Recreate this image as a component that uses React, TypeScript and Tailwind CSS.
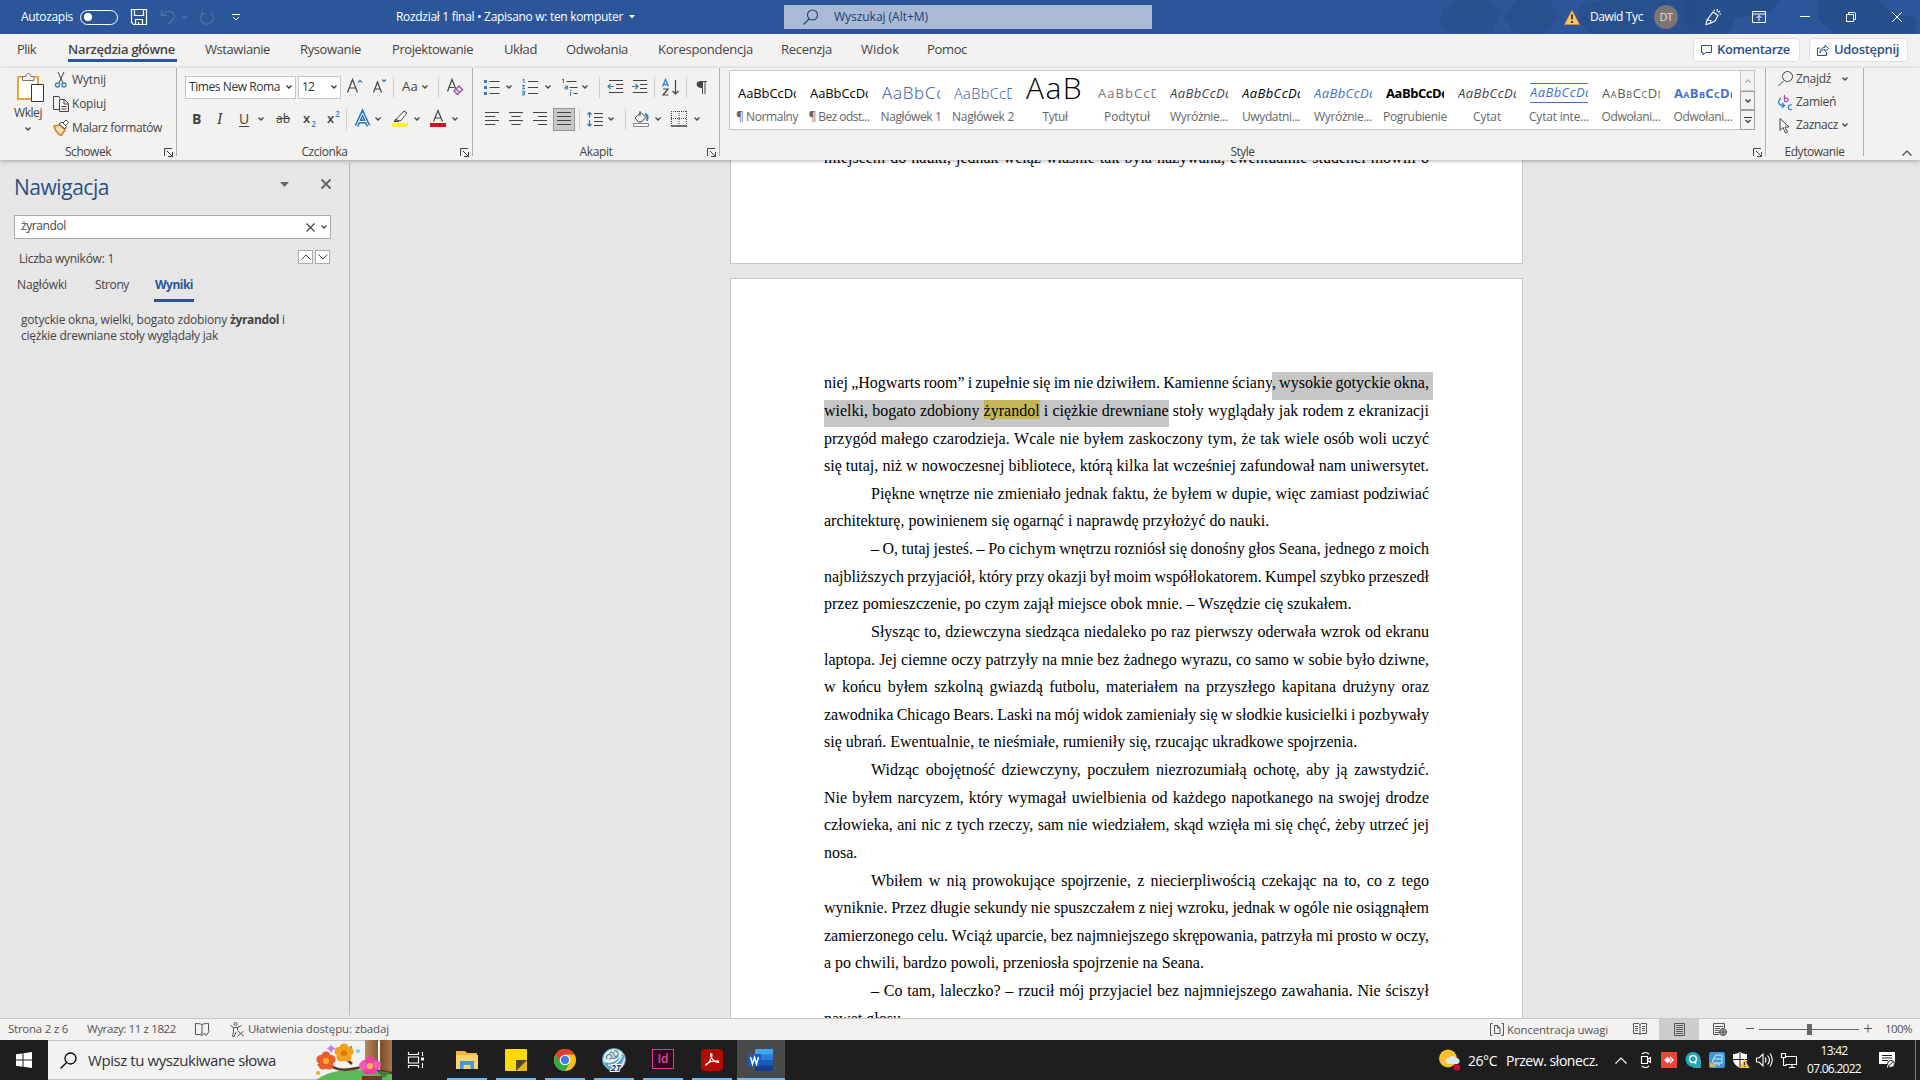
import { useLayoutEffect, useRef, useState } from "react"
import type { ReactNode } from "react"
import clsx from "clsx"

interface FitProps {
  w: number
  className?: string
  children: string
}

// Tracks a label in or out so that it fills exactly w pixels
function Fit({ w, className, children }: FitProps) {
  const ref = useRef<HTMLSpanElement>(null)
  const [spacing, setSpacing] = useState(0)

  useLayoutEffect(() => {
    if (!ref.current) return
    ref.current.style.letterSpacing = "0px"
    const natural = ref.current.getBoundingClientRect().width
    const next = (w - natural) / children.length
    ref.current.style.letterSpacing = `${next}px`
    setSpacing(next)
  }, [w, children])

  return (
    <span ref={ref} className={clsx("inline-block shrink-0 whitespace-nowrap", className)} style={{ letterSpacing: spacing }}>
      {children}
    </span>
  )
}

interface IconProps {
  w?: number
  h?: number
  className?: string
  children: ReactNode
}

function Icon({ w = 16, h = 16, className, children }: IconProps) {
  return (
    <svg
      width={w}
      height={h}
      viewBox={`0 0 ${w} ${h}`}
      fill="none"
      stroke="currentColor"
      strokeWidth="1"
      className={clsx("shrink-0 overflow-visible", className)}
    >
      {children}
    </svg>
  )
}

function Chevron({ className }: { className?: string }) {
  return (
    <Icon w={6} h={4} className={className}>
      <path d="M0.5 0.5 3 3 5.5 0.5" strokeWidth="1.3" />
    </Icon>
  )
}

function Launcher() {
  return (
    <Icon w={9} h={9}>
      <path d="M0.5 8V0.5H8M3 3l5 5M8.5 4v4.5H4" />
    </Icon>
  )
}

function Lines({ widths, align = "left" }: { widths: number[]; align?: "left" | "center" | "right" }) {
  return (
    <Icon w={14} h={14}>
      {widths.map((w, i) => {
        const x = align === "left" ? 0 : align === "right" ? 14 - w : (14 - w) / 2
        return <path key={i} d={`M${x} ${i * 4 + 0.5}h${w}`} />
      })}
    </Icon>
  )
}

/* ---------- Title bar ---------- */

function TitleBar() {
  return (
    <header className="relative flex h-[34px] shrink-0 items-center overflow-hidden bg-[#2b579a] text-xs text-white">
      <div className="absolute inset-y-0 right-0 w-[480px]">
        <svg width="480" height="34" fill="#264b85">
          <path d="M4 8 14 0h36l10 12-8 22H14L0 24Z" opacity=".5" />
          <path d="M76 0h34l8 14-12 20H74L64 16ZM142 4l22-4h90l10 15-9 19H150l-14-14Z" opacity=".55" />
          <path d="M246 0h94l-10 12-34 6-8 16h-32l-14-14ZM378 0h60l14 14 24 4v16h-80l-18-14Z" opacity=".65" />
        </svg>
      </div>
      <div className="relative flex w-full items-center">
        <Fit w={52} className="ml-[21px]">Autozapis</Fit>
        <div className="ml-[7px] flex h-[15px] w-[38px] items-center rounded-full border border-white px-[3px]">
          <div className="size-[8px] rounded-full bg-white" />
        </div>
        <Icon className="ml-[13px]">
          <path d="M.5.5h15v15h-13l-2-2ZM3.5.5v6h9v-6M4.5 15.500v-5h7v5M7.500 13v2.500" strokeWidth="1.2" />
        </Icon>
        <div className="flex items-center text-[#4a70ac]">
          <Icon w={14} className="ml-[14px]">
            <path d="M.5 1v5.500H6M1 6C4 2 9 1 12 4s1 7-5 11" strokeWidth="1.3" />
          </Icon>
          <Chevron className="ml-[7px]" />
          <Icon w={16} className="ml-[11px]">
            <path d="M3 1v4h4M3 5C-.500 9 2 15 8 15s9-7 4-11" strokeWidth="1.3" />
          </Icon>
        </div>
        <Icon w={8} h={7} className="ml-[17px]">
          <path d="M0 .5h8M1 3l3 3 3-3" />
        </Icon>
        <Fit w={227} className="ml-[156px]">Rozdział 1 final • Zapisano w: ten komputer</Fit>
        <Icon w={6} h={4} className="ml-[6px]">
          <path d="M0 0h6L3 3.500Z" fill="currentColor" stroke="none" />
        </Icon>
        <div className="ml-[149px] flex h-[24px] w-[368px] items-center bg-[#a8bad5] text-[#1e3f73]">
          <Icon w={16} className="ml-[19px]">
            <circle cx="9.500" cy="6" r="5" strokeWidth="1.1" />
            <path d="M6 10 .5 15.500" strokeWidth="1.1" />
          </Icon>
          <Fit w={94} className="ml-[15px]">Wyszukaj (Alt+M)</Fit>
        </div>
        <Icon w={16} h={15} className="ml-auto">
          <path d="M8 .5 15.500 14.500H.5Z" fill="#f8c66b" stroke="#d98536" />
          <path d="M8 4.500v5M8 11v2" stroke="#333" strokeWidth="1.800" />
        </Icon>
        <Fit w={53} className="ml-[10px]">Dawid Tyc</Fit>
        <div className="ml-[11px] flex size-6 items-center justify-center rounded-full bg-[#7c7473] text-[11px] text-[#e3dfde]">
          <Fit w={13}>DT</Fit>
        </div>
        <Icon w={16} className="ml-[27px]">
          <path d="M8 3 13 6.500 10 12 5 14.500 1 15.500 2 11ZM2 11l4 .5-1 3M9 .5l.5 1.500M12.500 0 12 2.500M15 2l-2 1.500M16 5h-1.500" strokeWidth="1.1" />
        </Icon>
        <Icon w={14} h={12} className="-mt-px ml-[31px]">
          <path d="M.5.5h13v11H.5ZM.5 3h13M7 10V4.500M4.500 7 7 4.500 9.500 7" />
        </Icon>
        <Icon w={10} h={10} className="-mt-px ml-[34px]"><path d="M0 4.500h10" /></Icon>
        <Icon w={10} h={10} className="-mt-px ml-[36px]">
          <path d="M.5 2.500h7v7h-7ZM2.500 2.500v-2h6a1 1 0 0 1 1 1v6h-2" />
        </Icon>
        <Icon w={10} h={10} className="-mt-px ml-[36px] mr-[18px]"><path d="m0 0 10 10M10 0 0 10" /></Icon>
      </div>
    </header>
  )
}

/* ---------- Tabs ---------- */

const TABS = [
  { label: "Wstawianie", w: 65, className: "ml-[28px]" },
  { label: "Rysowanie", w: 61, className: "ml-[30px]" },
  { label: "Projektowanie", w: 81, className: "ml-[31px]" },
  { label: "Układ", w: 33, className: "ml-[31px]" },
  { label: "Odwołania", w: 62, className: "ml-[29px]" },
  { label: "Korespondencja", w: 95, className: "ml-[30px]" },
  { label: "Recenzja", w: 51, className: "ml-[28px]" },
  { label: "Widok", w: 38, className: "ml-[29px]" },
  { label: "Pomoc", w: 40, className: "ml-[28px]" },
]

function TabBar() {
  return (
    <nav className="flex h-[34px] shrink-0 items-center bg-[#f3f2f1] pb-[2px] text-[13px] text-[#444]">
      <Fit w={19} className="ml-[17px]">Plik</Fit>
      <div className="ml-[32px] flex h-[24px] w-[109px] flex-col items-start border-b-[3px] border-[#2b579a]">
        <Fit w={107} className="mt-[2px] font-semibold leading-[19px]">Narzędzia główne</Fit>
      </div>
      {TABS.map((tab) => (
        <Fit key={tab.label} w={tab.w} className={tab.className}>{tab.label}</Fit>
      ))}
      <div className="ml-auto mr-[12px] flex gap-[9px] font-semibold text-[#2b4f87]">
        <button className="flex h-[24px] w-[107px] items-center rounded-sm border border-[#e1dfdd] bg-white pl-[7px]">
          <Icon w={11} h={11}><path d="M.5.5h10v7H4.500l-2.500 2.500V7.500H.5Z" /></Icon>
          <Fit w={73} className="ml-[5px]">Komentarze</Fit>
        </button>
        <button className="flex h-[24px] w-[99px] items-center rounded-sm border border-[#e1dfdd] bg-white pl-[7px]">
          <Icon w={12} h={12}>
            <path d="M3 4H.5v7.500h9V8M3 9c0-4 2-5.500 5-5.500V1l3.500 3.500L8 7.500V5.500C6 5.500 4 6 3 9Z" />
          </Icon>
          <Fit w={65} className="ml-[5px]">Udostępnij</Fit>
        </button>
      </div>
    </nav>
  )
}

/* ---------- Ribbon ---------- */

function Group({ label, labelWidth, className, launcher = true, children }: {
  label: string
  labelWidth: number
  className: string
  launcher?: boolean
  children: ReactNode
}) {
  return (
    <section className={clsx("flex h-[88px] shrink-0 flex-col border-r border-[#b3b0ad]", className)}>
      <div className="h-[76px] shrink-0">{children}</div>
      <div className="flex h-[16px] shrink-0 items-center">
        <span className={clsx("flex flex-1 justify-center", launcher && "-mr-[14px]")}>
          <Fit w={labelWidth}>{label}</Fit>
        </span>
        {launcher && <span className="w-[14px] pl-[2px]"><Launcher /></span>}
      </div>
    </section>
  )
}

function Divider({ className }: { className?: string }) {
  return <div className={clsx("h-[21px] w-px shrink-0 bg-[#d2d0ce]", className)} />
}

function ClipboardGroup() {
  return (
    <Group label="Schowek" labelWidth={46} className="w-[177px]">
      <div className="flex">
        <div className="flex w-[52px] flex-col items-start pl-[14px] pt-[4px]">
          <Icon w={32} h={31} className="-ml-px">
            <path d="M5 5h20v22H5Z" fill="#fff" stroke="#e8a33d" strokeWidth="2" />
            <path d="M9.500 4.500H13c0-4 5-4 5 0h3v4H9.500Z" fill="#f3f2f1" stroke="#777" />
            <path d="M18.500 12.500h12v17h-12Z" fill="#fff" stroke="#333" />
          </Icon>
          <Fit w={28} className="mt-[2px] leading-4">Wklej</Fit>
          <Chevron className="ml-[11px] mt-[6px]" />
        </div>
        <div className="flex flex-col">
          <div className="flex h-6 items-center">
            <Icon w={12} className="ml-[3px]">
              <path d="M3 0 8 11M9 0 4 11" />
              <circle cx="2.500" cy="13" r="2" stroke="#2e86c8" strokeWidth="1.300" />
              <circle cx="9" cy="13" r="2" stroke="#2e86c8" strokeWidth="1.300" />
            </Icon>
            <Fit w={34} className="ml-[5px]">Wytnij</Fit>
          </div>
          <div className="flex h-6 items-center">
            <Icon className="ml-[1px]">
              <path d="M6 13.500H.5V.5H6l1 2M6.500 3.500h5l4 4v8h-9ZM11 4v4h4M8.500 10.500h5M8.500 13h5" />
            </Icon>
            <Fit w={34} className="ml-[3px]">Kopiuj</Fit>
          </div>
          <div className="flex h-6 items-center">
            <Icon className="ml-[1px]">
              <path d="M1 6 7 5l5 5-4 5.500C5 14 2 10 1 6Z" fill="#f9ddb9" stroke="#e07b20" strokeWidth="1.500" />
              <path d="m6 4 3-2 4.500 4.500L12 9ZM10 3l3-3 2.500 2.500-3 3" fill="#fff" />
            </Icon>
            <Fit w={90} className="ml-[3px]">Malarz formatów</Fit>
          </div>
        </div>
      </div>
    </Group>
  )
}

function FontGroup() {
  return (
    <Group label="Czcionka" labelWidth={46} className="w-[296px]">
      <div className="mt-[8px] flex h-[22px] items-center pl-[8px]">
        <div className="flex h-[23px] w-[111px] shrink-0 items-center justify-between border border-[#c8c6c4] bg-white px-[3px] text-[#333]">
          <Fit w={91}>Times New Roma</Fit>
          <Chevron />
        </div>
        <div className="ml-[2px] flex h-[23px] w-[43px] shrink-0 items-center justify-between border border-[#c8c6c4] bg-white px-[3px] text-[#333]">
          <Fit w={12}>12</Fit>
          <Chevron />
        </div>
        <Icon w={16} h={14} className="-mt-[3px] ml-[6px]">
          <path d="M.5 13.500 5.500.5l5 13M2.500 9h6" strokeWidth="1.200" />
          <path d="m11 3.500 2-2 2 2" stroke="#2e86c8" strokeWidth="1.300" />
        </Icon>
        <Icon w={14} h={12} className="ml-[10px]">
          <path d="M.5 11.500 4.500 1l4 10.500M2 8h5" strokeWidth="1.200" />
          <path d="m9 -1.500 2 2 2-2" stroke="#2e86c8" strokeWidth="1.300" />
        </Icon>
        <Divider className="ml-[6px]" />
        <Fit w={16} className="ml-[8px] text-[13px]">Aa</Fit>
        <Chevron className="ml-[4px]" />
        <Divider className="ml-[10px]" />
        <Icon w={17} className="ml-[8px]">
          <path d="M.5 12.500 5 .5l4 10M2 8.500h5" strokeWidth="1.200" />
          <path d="m7 12 5-5 3.500 3.500-5 5ZM9 10l3.500 3.500" stroke="#a347b5" strokeWidth="1.300" />
        </Icon>
      </div>
      <div className="mt-[10px] flex h-[22px] items-center">
        <b className="ml-[15px] w-[10px] text-[14px] font-bold">B</b>
        <i className="ml-[15px] w-[8px] font-['Liberation_Serif',serif] text-[16px]">I</i>
        <span className="ml-[14px] w-[10px] text-[14px] underline underline-offset-2">U</span>
        <Chevron className="ml-[9px]" />
        <Fit w={14} className="ml-[12px] line-through">ab</Fit>
        <span className="ml-[13px] flex w-[13px] text-[13px] font-semibold">
          x<span className="self-end pl-px text-[8px] leading-[8px] text-[#2e86c8]">2</span>
        </span>
        <span className="ml-[11px] flex w-[13px] text-[13px] font-semibold">
          x<span className="pl-px text-[8px] leading-[8px] text-[#2e86c8]">2</span>
        </span>
        <Divider className="ml-[6px]" />
        <Icon w={15} h={15} className="ml-[8px]">
          <path d="M1.500 14 7.500 1l6 13M4 9.500h7" stroke="#2474b8" strokeWidth="4" />
          <path d="M1.500 14 7.500 1l6 13M4 9.500h7" stroke="#fff" strokeWidth="1" />
        </Icon>
        <Chevron className="ml-[5px]" />
        <Icon w={16} h={16} className="ml-[11px]">
          <path d="M0 12h16v4H0Z" fill="#fdf02d" stroke="none" />
          <path d="M4 8.500 12 0l3 2-6 7.500-4 .5Z" fill="#f8f8f8" />
          <path d="m4 8 3 2.500H2Z" fill="#777" />
        </Icon>
        <Chevron className="ml-[6px]" />
        <Icon w={16} h={16} className="ml-[10px]">
          <path d="M0 12h16v4H0Z" fill="#c9161d" stroke="none" />
          <path d="M3.500 10.500 8 -.5l4.500 11M5 7h6" strokeWidth="1.200" />
        </Icon>
        <Chevron className="ml-[6px]" />
      </div>
    </Group>
  )
}

function ParagraphGroup() {
  return (
    <Group label="Akapit" labelWidth={33} className="w-[247px]">
      <div className="mt-[8px] flex h-[22px] items-center">
        <Icon className="ml-[11px]">
          <path d="M5.500 2.500h10M5.500 8.500h10M5.500 14.500h10" />
          <path d="M0 1h3v3H0ZM0 7h3v3H0ZM0 13h3v3H0Z" fill="#2e7cbc" stroke="none" />
        </Icon>
        <Chevron className="ml-[6px]" />
        <Icon className="ml-[10px]">
          <path d="M6 2.500h10M6 8.500h10M6 14.500h10" />
          <path d="M.5 1 2 0v4M0 6.500h2.500L.500 9.500H3M0 12h2.500v4H0M0 14h2.500" stroke="#2e7cbc" />
        </Icon>
        <Chevron className="ml-[7px]" />
        <Icon className="ml-[11px]">
          <path d="M4.500 2.500h10M7.500 8.500h8M11.500 14.500h4" />
          <path d="M0 1 1.500 0v4M3 7h2.500v3H3V8.500h2.500M8.500 11v1M8.500 13v3.500" stroke="#2e7cbc" />
        </Icon>
        <Chevron className="ml-[4px]" />
        <Divider className="ml-[11px]" />
        <Icon w={15} h={14} className="ml-[8px]">
          <path d="M1 .5h14M8 4.500h7M8 8.500h7M1 12.500h14" />
          <path d="M0 6.500h6M2.500 4 0 6.500 2.500 9" stroke="#2e7cbc" strokeWidth="1.200" />
        </Icon>
        <Icon w={15} h={14} className="ml-[9px]">
          <path d="M1 .5h14M8 4.500h7M8 8.500h7M1 12.500h14" />
          <path d="M0 6.500h6M3.500 4 6 6.500 3.500 9" stroke="#2e7cbc" strokeWidth="1.200" />
        </Icon>
        <Divider className="ml-[7px]" />
        <Icon w={17} h={17} className="ml-[7px]">
          <path d="M.5 7.500 3.500.5l3 7M1.500 5.500h4" stroke="#2e86c8" strokeWidth="1.300" />
          <path d="M1 10h5l-5 6h5.500M13.500 1v14M10.500 12l3 3 3-3" strokeWidth="1.200" />
        </Icon>
        <Divider className="ml-[7px]" />
        <Icon w={11} h={13} className="ml-[9px]">
          <path d="M5 0h6v1H9.500v12h-1V1H7v12H6V7C-1 7-1 0 5 0Z" fill="currentColor" stroke="none" />
        </Icon>
      </div>
      <div className="mt-[10px] flex h-[22px] items-center">
        <div className="ml-[12px] flex items-center gap-[10px]">
          <Lines widths={[14, 10, 14, 10]} />
          <Lines widths={[14, 9, 14, 9]} align="center" />
          <Lines widths={[14, 9, 14, 9]} align="right" />
        </div>
        <div className="ml-[6px] flex h-[23px] w-[22px] items-center justify-center border border-[#979593] bg-[#cbc9c8]">
          <Lines widths={[14, 14, 14, 14]} />
        </div>
        <Divider className="ml-[4px]" />
        <Icon w={16} h={14} className="ml-[7px]">
          <path d="M7 1.500h9M7 5.500h9M7 9.500h9M7 13.500h9" />
          <path d="M2.500 0v5.500M.5 2.500l2-2 2 2M2.500 8v6M.5 12l2 2 2-2" stroke="#2e7cbc" strokeWidth="1.300" />
        </Icon>
        <Chevron className="ml-[5px]" />
        <Divider className="ml-[11px]" />
        <Icon w={16} h={16} className="ml-[7px]">
          <path d="M.5 12.500h15v3H.5Z" fill="#fff" stroke="#888" />
          <path d="m2 7 6-5.500 5 5L8 11H5.500ZM7 5V0" />
          <path d="M12 3c3 1 3 4 2 7" stroke="#2e7cbc" strokeWidth="2" />
        </Icon>
        <Chevron className="ml-[6px]" />
        <Icon w={16} h={16} className="ml-[10px]">
          <path d="M.5 0v15M8 0v15M15.500 0v15M0 .5h16M0 7.500h16" strokeDasharray="1 1" />
          <path d="M0 15h16" strokeWidth="1.500" />
        </Icon>
        <Chevron className="ml-[7px]" />
      </div>
    </Group>
  )
}

interface StyleItem {
  name: string
  w: number
  sample?: string
  sw?: number
  className: string
}

const STYLES: StyleItem[] = [
  { name: "¶ Normalny", w: 62, className: "text-[13px] text-black" },
  { name: "¶ Bez odst...", w: 61, className: "text-[13px] text-black" },
  { name: "Nagłówek 1", w: 61, sample: "AaBbCc", sw: 63, className: "text-[17px] font-light text-[#2f5496]" },
  { name: "Nagłówek 2", w: 62, sample: "AaBbCcD", sw: 63, className: "text-[14.5px] font-light text-[#2f5496]" },
  { name: "Tytuł", w: 25, sample: "AaB", sw: 57, className: "-mt-[11px] text-[30px] font-light text-black" },
  { name: "Podtytuł", w: 46, sample: "AaBbCcD", sw: 63, className: "text-[13px] text-[#767676]" },
  { name: "Wyróżnie...", w: 58, className: "text-[13px] italic text-[#404040]" },
  { name: "Uwydatni...", w: 58, className: "text-[13px] italic text-black" },
  { name: "Wyróżnie...", w: 58, className: "text-[13px] italic text-[#4472c4]" },
  { name: "Pogrubienie", w: 64, className: "text-[13px] font-bold text-black" },
  { name: "Cytat", w: 28, className: "text-[13px] italic text-[#404040]" },
  { name: "Cytat inte...", w: 60, className: "-mt-[2px] h-[20px] border-y border-[#4472c4] text-[13px] italic text-[#4472c4]" },
  { name: "Odwołani...", w: 59, className: "text-[13px] [font-variant-caps:small-caps] text-[#5a5a5a]" },
  { name: "Odwołani...", w: 59, className: "text-[13px] font-bold [font-variant-caps:small-caps] text-[#4472c4]" },
]

function StylesGroup() {
  return (
    <Group label="Style" labelWidth={24} className="w-[1046px]">
      <div className="ml-[9px] mt-[2px] flex h-[60px] w-[1026px] border border-[#c8c6c4] bg-white">
        <div className="flex flex-1 pl-[1px]">
          {STYLES.map((item, i) => (
            <div key={i} className="flex w-[72px] shrink-0 flex-col items-center pt-[6px]">
              <div className="flex h-[33px] w-[58px] items-center overflow-hidden">
                <div className={clsx("flex w-full items-center", item.className)}>
                  <Fit w={item.sw ?? 63}>{item.sample ?? "AaBbCcDd"}</Fit>
                </div>
              </div>
              <Fit w={item.w} className="leading-[14px] text-[#666]">{item.name}</Fit>
            </div>
          ))}
        </div>
        <div className="-my-px -mr-px flex w-[15px] flex-col text-[#333]">
          <div className="flex h-[21px] items-center justify-center border border-[#c8c6c4] bg-[#f3f2f1] text-[#b0b0b0]">
            <Chevron className="rotate-180" />
          </div>
          <div className="flex h-[19px] items-center justify-center border border-[#a19f9d] bg-[#f3f2f1]">
            <Chevron />
          </div>
          <div className="flex h-[20px] items-center justify-center border border-[#a19f9d] bg-[#f3f2f1]">
            <Icon w={8} h={7}><path d="M0 .5h8M1.500 3 4 5.500 6.500 3" strokeWidth="1.200" /></Icon>
          </div>
        </div>
      </div>
    </Group>
  )
}

function EditingGroup() {
  return (
    <Group label="Edytowanie" labelWidth={60} className="w-[98px]" launcher={false}>
      <div className="flex flex-col pl-[12px]">
        <div className="flex h-[22px] items-center">
          <Icon w={15} h={15} className="-mt-[2px]">
            <circle cx="9.500" cy="5.500" r="5" />
            <path d="m6 9.500-5.500 5.500" />
          </Icon>
          <Fit w={35} className="ml-[3px]">Znajdź</Fit>
          <Chevron className="ml-[11px]" />
        </div>
        <div className="flex h-[24px] items-center">
          <Icon w={15} h={15}>
            <path d="M6.500 0v6.500M6.500 3.500c5-2 5 4 0 3" stroke="#a347b5" strokeWidth="1.200" />
            <path d="M3 3C-1 6 0 11 6 10.500M4 8l2.500 2.500L4 13M14 10c-5-1.500-5 6 0 4.500" stroke="#2e86c8" strokeWidth="1.300" />
          </Icon>
          <Fit w={40} className="ml-[3px]">Zamień</Fit>
        </div>
        <div className="flex h-[22px] items-center">
          <Icon w={15} h={15}>
            <path d="M2 .5v12l3-3 2.500 5.500 2-1-2.500-5h4Z" />
          </Icon>
          <Fit w={42} className="ml-[3px]">Zaznacz</Fit>
          <Chevron className="ml-[4px]" />
        </div>
      </div>
    </Group>
  )
}

function Ribbon() {
  return (
    <div className="relative z-10 flex h-[92px] shrink-0 bg-[#f3f2f1] text-xs text-[#444] shadow-[0_1px_4px_rgba(0,0,0,0.3)]">
      <ClipboardGroup />
      <FontGroup />
      <ParagraphGroup />
      <StylesGroup />
      <EditingGroup />
      <Icon w={10} h={6} className="ml-[38px] mt-[82px]"><path d="m.5 5.500 4.500-4.500 4.500 4.500" strokeWidth="1.200" /></Icon>
    </div>
  )
}

/* ---------- Navigation pane ---------- */

function NavigationPane() {
  return (
    <aside className="mt-[3px] h-[852px] w-[350px] shrink-0 border-r border-[#b8b8b8] pt-[10px] text-xs text-[#444]">
      <div className="flex h-[28px] items-center pl-[14px] text-[#2b4f87]">
        <Fit w={95} className="text-[21px] leading-[28px]">Nawigacja</Fit>
        <Icon w={9} h={5} className="-mt-[6px] ml-[171px] text-[#666]">
          <path d="M0 0h9L4.500 5Z" fill="currentColor" stroke="none" />
        </Icon>
        <Icon w={10} h={10} className="-mt-[6px] ml-[32px] text-[#666]"><path d="m.5.5 9 9M9.500.5l-9 9" strokeWidth="2" /></Icon>
      </div>
      <div className="ml-[14px] mt-[14px] flex h-[24px] w-[317px] items-center border border-[#ababab] bg-white pl-[6px] pr-[3px]">
        <Fit w={45} className="-mt-[2px]">żyrandol</Fit>
        <Icon w={9} h={9} className="ml-auto mr-[6px]"><path d="m.5.5 8 8M8.500.5l-8 8" strokeWidth="1.200" /></Icon>
        <Chevron />
      </div>
      <div className="mt-[10px] flex h-[16px] items-center pl-[19px]">
        <Fit w={95} className="mt-[4px]">Liczba wyników: 1</Fit>
        <div className="ml-auto mr-[19px] flex gap-[2px]">
          <div className="flex h-[14px] w-[15px] items-center justify-center border border-[#ababab] bg-white">
            <Icon w={10} h={6}><path d="m.5 5.500 4.500-4.500 4.500 4.500" /></Icon>
          </div>
          <div className="flex h-[14px] w-[15px] items-center justify-center border border-[#ababab] bg-white">
            <Icon w={10} h={6}><path d="m.5.5 4.500 4.500 4.500-4.500" /></Icon>
          </div>
        </div>
      </div>
      <div className="mt-[11px] flex h-[26px] pl-[17px] leading-[18px]">
        <Fit w={50}>Nagłówki</Fit>
        <Fit w={34} className="ml-[28px]">Strony</Fit>
        <div className="ml-[25px] w-[40px] border-b-[3px] border-[#2f5496] pl-px font-bold text-[#2b579a]">
          <Fit w={38}>Wyniki</Fit>
        </div>
      </div>
      <div className="mt-[10px] pl-[21px] leading-[16px]">
        <p className="flex gap-[3px]">
          <Fit w={206}>gotyckie okna, wielki, bogato zdobiony</Fit>
          <Fit w={49} className="font-bold">żyrandol</Fit>
          <span>i</span>
        </p>
        <p><Fit w={197}>ciężkie drewniane stoły wyglądały jak</Fit></p>
      </div>
    </aside>
  )
}

/* ---------- Document ---------- */

const PARAGRAPHS = [
  [
    "Piękne wnętrze nie zmieniało jednak faktu, że byłem w dupie, więc zamiast podziwiać",
    "architekturę, powinienem się ogarnąć i naprawdę przyłożyć do nauki.",
  ],
  [
    "– O, tutaj jesteś. – Po cichym wnętrzu rozniósł się donośny głos Seana, jednego z moich",
    "najbliższych przyjaciół, który przy okazji był moim współlokatorem. Kumpel szybko przeszedł",
    "przez pomieszczenie, po czym zajął miejsce obok mnie. – Wszędzie cię szukałem.",
  ],
  [
    "Słysząc to, dziewczyna siedząca niedaleko po raz pierwszy oderwała wzrok od ekranu",
    "laptopa. Jej ciemne oczy patrzyły na mnie bez żadnego wyrazu, co samo w sobie było dziwne,",
    "w końcu byłem szkolną gwiazdą futbolu, materiałem na przyszłego kapitana drużyny oraz",
    "zawodnika Chicago Bears. Laski na mój widok zamieniały się w słodkie kusicielki i pozbywały",
    "się ubrań. Ewentualnie, te nieśmiałe, rumieniły się, rzucając ukradkowe spojrzenia.",
  ],
  [
    "Widząc obojętność dziewczyny, poczułem niezrozumiałą ochotę, aby ją zawstydzić.",
    "Nie byłem narcyzem, który wymagał uwielbienia od każdego napotkanego na swojej drodze",
    "człowieka, ani nic z tych rzeczy, sam nie wiedziałem, skąd wzięła mi się chęć, żeby utrzeć jej",
    "nosa.",
  ],
  [
    "Wbiłem w nią prowokujące spojrzenie, z niecierpliwością czekając na to, co z tego",
    "wyniknie. Przez długie sekundy nie spuszczałem z niej wzroku, jednak w ogóle nie osiągnąłem",
    "zamierzonego celu. Wciąż uparcie, bez najmniejszego skrępowania, patrzyła mi prosto w oczy,",
    "a po chwili, bardzo powoli, przeniosła spojrzenie na Seana.",
  ],
  [
    "– Co tam, laleczko? – rzucił mój przyjaciel bez najmniejszego zawahania. Nie ściszył",
    "nawet głosu.",
  ],
]

// Full lines start from tightened word gaps and are then justified to the column
function Line({ indent, last, children }: { indent?: boolean; last?: boolean; children: ReactNode }) {
  return (
    <p
      className={clsx(
        "h-[27.63px] whitespace-nowrap",
        indent && "pl-[47px]",
        !last && "[text-align-last:justify] [word-spacing:-1.1px]"
      )}
    >
      {children}
    </p>
  )
}

function DocumentView() {
  return (
    <main className="flex flex-1 flex-col overflow-hidden pl-[380px] font-['Liberation_Serif',serif] text-[16px] leading-[27.6px] text-black">
      <div className="h-[104px] w-[793px] shrink-0 border border-t-0 border-[#c6c6c6] bg-white px-[93px]">
        <div className="-mt-[16px]">
          <Line>miejscem do nauki, jednak wciąż właśnie tak była nazywana, ewentualnie studenci mówili o</Line>
        </div>
      </div>
      <div className="mt-[14px] h-[1122px] w-[793px] shrink-0 border border-[#c6c6c6] bg-white px-[93px] pt-[90.3px]">
        <Line>
          niej „Hogwarts room” i zupełnie się im nie dziwiłem. Kamienne ściany
          <span className="-mr-[4px] bg-[#c6c6c6] pb-[9px] pr-[4px] pt-[2px]">, wysokie gotyckie okna,</span>
        </Line>
        <Line>
          <span className="bg-[#c6c6c6] pb-[8px] pt-[2px]">
            wielki, bogato zdobiony <span className="bg-[#c5b755] pt-[2px]">żyrandol</span> i ciężkie drewniane
          </span>{" "}
          stoły wyglądały jak rodem z ekranizacji
        </Line>
        <Line>przygód małego czarodzieja. Wcale nie byłem zaskoczony tym, że tak wiele osób woli uczyć</Line>
        <Line>się tutaj, niż w nowoczesnej bibliotece, którą kilka lat wcześniej zafundował nam uniwersytet.</Line>
        {PARAGRAPHS.map((lines) =>
          lines.map((line, i) => (
            <Line key={line} indent={i === 0} last={i === lines.length - 1}>{line}</Line>
          ))
        )}
      </div>
    </main>
  )
}

/* ---------- Status bar ---------- */

function StatusBar() {
  return (
    <footer className="flex h-[22px] shrink-0 items-center border-t border-[#c6c6c6] bg-[#f3f2f1] text-[11.5px] text-[#555]">
      <Fit w={60} className="-mt-[2px] ml-[8px]">Strona 2 z 6</Fit>
      <Fit w={89} className="-mt-[2px] ml-[19px]">Wyrazy: 11 z 1822</Fit>
      <Icon w={14} h={13} className="-mt-px ml-[19px]">
        <path d="M7 1.500V12M7 1.500C5 .5 3 .5.500.500v11H5l2 1 2-2M7 1.500C9 .5 11 .5 13.500.500V8M9 10l2 2.500L14.500 8" />
      </Icon>
      <Icon w={14} h={15} className="-mt-px ml-[21px]">
        <circle cx="5.500" cy="2" r="1.500" />
        <path d="m.5 3.500 3 2v4l-1 5 1.500.5 2-5M11.500 3.500l-4 2v3M3.500 5.500h4M8 9l6 5.500M13.500 9l-6 5.500" />
      </Icon>
      <Fit w={141} className="-mt-[2px] ml-[4px]">Ułatwienia dostępu: zbadaj</Fit>
      <Icon w={14} h={13} className="-mt-px ml-auto">
        <path d="M2.500.5h-2v12h2M11.500.5h2v12h-2M4.500 2.500h3l2.500 2.500v5.500H4.500ZM7.500 2.500V5H10" />
      </Icon>
      <Fit w={101} className="ml-[3px]">Koncentracja uwagi</Fit>
      <Icon w={14} h={12} className="-mt-px ml-[25px]">
        <path d="M7 1.500v10M.5.500h5L7 1.500l1.500-1h5v10h-5L7 11.500l-1.500-1h-5ZM2 3.500h3M2 5.500h3M2 7.500h3M9 3.500h3M9 5.500h3M9 7.500h3" />
      </Icon>
      <div className="ml-[12px] mr-px flex h-[21px] w-[40px] items-center justify-center bg-[#cfcdcc]">
        <Icon w={11} h={13} className="-mt-px"><path d="M.5.5h10v12H.5ZM2 2.500h7M2 4.500h7M2 6.500h7M2 8.500h7M2 10.500h7" /></Icon>
      </div>
      <Icon w={14} h={13} className="-mt-px ml-[13px]">
        <path d="M6 11.500H.5V.5h11V5M2 3.500h8M2 5.500h5M2 7.500h4M2 9.500h4" />
        <circle cx="10" cy="9" r="3.500" fill="#aaa" />
        <path d="M6.500 9h7M10 5.500v7" />
      </Icon>
      <Icon w={8} h={8} className="-mt-px ml-[19px]"><path d="M0 3.500h8" /></Icon>
      <div className="ml-[5px] flex h-[11px] w-[100px] items-center">
        <div className="h-px w-[48px] bg-[#666]" />
        <div className="h-[11px] w-[5px] bg-[#666]" />
        <div className="h-px w-[47px] bg-[#666]" />
      </div>
      <Icon w={8} h={8} className="-mt-px ml-[5px]"><path d="M0 3.500h8M4 -.5v8" /></Icon>
      <Fit w={27} className="-mt-[2px] ml-[13px] mr-[8px]">100%</Fit>
    </footer>
  )
}

/* ---------- Taskbar ---------- */

function Petals({ x, y, fill, center }: { x: number; y: number; fill: string; center: string }) {
  return (
    <g transform={`translate(${x} ${y})`} fill={fill} stroke="none">
      <circle cx="0" cy="-5" r="4.500" />
      <circle cx="5" cy="-1.500" r="4.500" />
      <circle cx="3" cy="4" r="4.500" />
      <circle cx="-3" cy="4" r="4.500" />
      <circle cx="-5" cy="-1.500" r="4.500" />
      <circle r="3" fill={center} />
    </g>
  )
}

function Flowers() {
  return (
    <svg width="78" height="40" viewBox="0 0 78 40" className="ml-auto shrink-0">
      <defs>
        <linearGradient id="trunk">
          <stop offset="0" stopColor="#b98a5c" />
          <stop offset=".6" stopColor="#7d4d2b" />
          <stop offset="1" stopColor="#a87648" />
        </linearGradient>
      </defs>
      <path d="M51 0h13v40H51ZM66 0h12v40H66Z" fill="url(#trunk)" />
      <path d="M2 40C20 26 52 28 78 34v6Z" fill="#5cb85a" />
      <path d="M14 24c10 8 20 6 34 3M30 17l8 7M60 30l18 3" fill="none" stroke="#5b3426" strokeWidth="2.500" />
      <path d="M48 36h20v4H48Z" fill="#6b3b25" />
      <path d="M3 25l6-4v7ZM32 8l6-2-1 7ZM62 31l14 1-6 6Z" fill="#4a7a3a" />
      <Petals x={12} y={21} fill="#ee5a2a" center="#ffb02e" />
      <Petals x={30} y={13} fill="#f3a01c" center="#d97708" />
      <Petals x={56} y={26} fill="#ee3fa9" center="#ffb347" />
      <circle cx="49" cy="26" r="4" fill="#f05ab5" />
      <circle cx="63" cy="25" r="4" fill="#f05ab5" />
      <path d="m17 5 2 2 2.500 1.500L19 10l-2 3-2-3-2-1.500L15 7Z" fill="#c77df0" />
      <circle cx="44" cy="11" r="2" fill="#7ecbe0" />
      <circle cx="4" cy="33" r="2" fill="#f0a830" />
    </svg>
  )
}

function TaskApp({ active, children }: { active?: boolean; children: ReactNode }) {
  return (
    <div className={clsx("flex h-full shrink-0 flex-col items-center", active ? "w-[48px] bg-[#4a4a4a]" : "w-[40px]")}>
      <div className="flex h-[38px] items-center justify-center">{children}</div>
      <div className="h-[2px] w-full bg-[#76b9ed]" />
    </div>
  )
}

function Taskbar() {
  return (
    <div className="flex h-[40px] shrink-0 items-center bg-[#1e1e1e] text-white">
      <Icon w={16} h={16} className="ml-[16px]">
        <path d="M0 2.300 6.500 1.400v6.100H0ZM7.500 1.200 16 0v7.500H7.500ZM0 8.500h6.500v6.200L0 13.700ZM7.500 8.500H16V16l-8.500-1.200Z" fill="#fff" stroke="none" />
      </Icon>
      <div className="ml-[16px] flex h-[40px] w-[344px] items-center border-y border-[#c4c4c4] bg-[#f2f2f2] text-[#333]">
        <Icon w={17} h={17} className="ml-[12px] text-black">
          <circle cx="10.500" cy="6.500" r="5.500" strokeWidth="1.300" />
          <path d="m6.500 10.500-6 6" strokeWidth="1.300" />
        </Icon>
        <Fit w={188} className="ml-[11px] text-[15px]">Wpisz tu wyszukiwane słowa</Fit>
        <Flowers />
      </div>
      <Icon w={17} h={16} className="ml-[16px]">
        <path d="M.5 0v2.500h10V0M.5 5h10v6H.5ZM.5 16v-2.500h10V16M14.500 0v4M14.500 11v5" strokeWidth="1.200" />
        <path d="M13 5.500h3v3h-3Z" fill="#fff" stroke="none" />
      </Icon>
      <div className="ml-[22px] flex h-full gap-[9px]">
        <TaskApp>
          <svg width="22" height="20" className="mt-[2px]">
            <path d="M0 1h9l2 2h10v16H0Z" fill="#f0b73c" />
            <path d="M0 5h22v14H0Z" fill="#fcd36e" />
            <path d="M4 11h14v8h-3.500v-4h-7v4H4Z" fill="#3f9bdc" />
          </svg>
        </TaskApp>
        <TaskApp>
          <svg width="22" height="22" className="mt-[2px]">
            <path d="M0 1a1 1 0 0 1 1-1h20a1 1 0 0 1 1 1v20a1 1 0 0 1-1 1H1a1 1 0 0 1-1-1Z" fill="#ffda00" />
            <path d="M11 11h11v10a1 1 0 0 1-1 1H11Z" fill="#e5b90a" />
            <path d="M11 11h11L11 22Z" fill="#4a4643" />
          </svg>
        </TaskApp>
        <TaskApp>
          <svg width="22" height="22" viewBox="0 0 22 22" className="mt-[2px]">
            <circle cx="11" cy="11" r="11" fill="#fbc116" />
            <path d="M1.500 5.500A11 11 0 0 0 11 22l4.800-8.300L6.200 13.700Z" fill="#2da94f" />
            <path d="M11 5.500h9.500A11 11 0 0 0 1.500 5.500l4.700 8.200Z" fill="#e33b2e" />
            <circle cx="11" cy="11" r="5.300" fill="#fff" />
            <circle cx="11" cy="11" r="4.200" fill="#3f7ee8" />
          </svg>
        </TaskApp>
        <TaskApp>
          <svg width="24" height="24" viewBox="0 0 24 24" className="mt-[2px]">
            <ellipse cx="12" cy="11.500" rx="11.500" ry="11" fill="#dce9ee" stroke="#4d92ad" />
            <path d="M2 14c7 3 14-1 18-9l2 3c0 7-5 12-12 13-4 0-7-3-8-7Z" fill="#4aa6cc" />
            <path d="M3 13c8 2 14-3 17-8M6 17c6 1 11-3 14-9" fill="none" stroke="#eef5f7" strokeWidth="1.500" />
            <path d="M5 11c-2-3 2-6 4-4s0 4-2 4M8 5c2-2 4 0 4 2s3 2 4 0-1-5-4-4M10 10c2 1 5 0 6-2" fill="none" stroke="#6b8894" strokeWidth="1.300" />
            <text x="9" y="23" fontSize="9" fontWeight="bold" fontStyle="italic" fill="#23388f" stroke="#fff" strokeWidth="2" paintOrder="stroke">2T</text>
          </svg>
        </TaskApp>
        <TaskApp>
          <div className="flex h-[20px] w-[22px] items-center justify-center border border-[#d8409a] bg-[#2c0a1e] text-[12px] font-semibold leading-none text-[#e0489f]">
            Id
          </div>
        </TaskApp>
        <TaskApp>
          <svg width="22" height="22" viewBox="0 0 22 22" className="mt-[2px]">
            <rect width="22" height="22" rx="4" fill="#b30b00" />
            <path d="M5 16c3-2 6-7 6-10 0-2-1.500-2-1.500 0 0 3 4 7 7 7.500 2 0 1.500-1.700-1-1.600-3 0-7 1-9.500 2.500-1.500 1-1.500 1.800-1 1.600Z" fill="none" stroke="#fff" strokeWidth="1.200" />
          </svg>
        </TaskApp>
      </div>
      <div className="ml-[5px] h-full">
        <TaskApp active>
          <svg width="26" height="22" viewBox="0 0 26 22" className="mt-px">
            <path d="M7 0h18v6H7Z" fill="#41a5ee" />
            <path d="M7 5.500h18V11H7Z" fill="#2b7cd3" />
            <path d="M7 11h18v5.500H7Z" fill="#185abd" />
            <path d="M7 16.500h18V22H7Z" fill="#103f91" />
            <rect y="5" width="13" height="12.500" rx="1" fill="#185abd" />
            <path d="m2.500 8 2 7 2-6.500 2 6.500 2-7" fill="none" stroke="#fff" strokeWidth="1.500" />
          </svg>
        </TaskApp>
      </div>

      <div className="ml-auto flex items-center">
        <svg width="22" height="22" viewBox="0 0 22 22">
          <circle cx="9" cy="9.500" r="9" fill="#fbc02d" />
          <path d="M10 15a3 3 0 0 1 0-6 4 4 0 0 1 7 0 3 3 0 0 1 1 6Z" fill="#d5e9f8" />
          <circle cx="18" cy="18.500" r="3.300" fill="#c50f2f" />
        </svg>
        <Fit w={29} className="ml-[7px] text-[14px]">26°C</Fit>
        <Fit w={92} className="ml-[9px] text-[14px]">Przew. słonecz.</Fit>
        <Icon w={12} h={7} className="ml-[17px]"><path d="m.5 6.500 5.500-5.500 5.500 5.500" strokeWidth="1.200" /></Icon>
        <Icon w={12} h={16} className="ml-[13px]">
          <path d="M1.500 4.500h6v7h-6ZM7.500 7.500l3-2v5l-3-2M2 2C4 0 7 0 9 2M2 14c2 2 5 2 7 0" strokeWidth="1.200" />
        </Icon>
        <svg width="16" height="16" className="ml-[9px]">
          <path d="M0 0h16v16H0Z" fill="#ef443b" />
          <path d="M6.500 4.500 10 8l-3.500 3.500L3 8ZM9.500 4.500 13 8l-3.500 3.500-1-1L11 8 8.500 5.500Z" fill="#fff" />
        </svg>
        <svg width="16" height="16" className="ml-[8px]" fill="none">
          <circle cx="8" cy="7.500" r="7.500" fill="#25a8b0" />
          <path d="M8 8h8v8H8Z" fill="#25a8b0" />
          <circle cx="8" cy="7" r="3.500" stroke="#fff" strokeWidth="1.500" />
          <path d="m9.500 9 1.500 3" stroke="#fff" strokeWidth="1.500" />
        </svg>
        <svg width="16" height="16" className="ml-[8px]" fill="none">
          <rect width="16" height="16" rx="2" fill="#3f97d3" />
          <path d="M3 9 7 3h6v8H6ZM5 7h7M2 12h8v2" stroke="#d6edf8" />
          <path d="M1 10v5h7Z" fill="#d9b556" />
        </svg>
        <svg width="18" height="17" className="ml-[7px]">
          <path d="M8 0c2 1.500 4.500 2 7 2v5c0 4-3 7-7 9-4-2-7-5-7-9V2c2.500 0 5-.5 7-2Z" fill="#fff" />
          <path d="M7.500 1h1v15h-1ZM1 7h14v1H1Z" fill="#1e1e1e" />
          <path d="M12.500 6.500 17.500 16h-10Z" fill="#f8bd2c" />
          <path d="M12 10h1v3h-1ZM12 14h1v1h-1Z" fill="#333" />
        </svg>
        <Icon w={17} h={14} className="ml-[6px]">
          <path d="M.5 5v4h2.500l4 4V1L3 5ZM9 4.500q2 2.500 0 5M11.500 2.500q4 4.500 0 9M14 .5q4.500 6.500 0 13" strokeWidth="1.100" />
        </Icon>
        <Icon w={16} h={15} className="ml-[8px]">
          <path d="M4.500 3.500h11v8h-11M8 14.500h6M11 11.500v3M.500.500h4v4h-4ZM2.500 4.500v8h3" strokeWidth="1.100" />
        </Icon>
        <div className="ml-[9px] flex w-[56px] flex-col items-center text-xs leading-[18px]">
          <Fit w={27}>13:42</Fit>
          <Fit w={54}>07.06.2022</Fit>
        </div>
        <svg width="16" height="17" className="ml-[17px]" fill="none">
          <path d="M0 0h16v12h-4l-4 4v-4H0Z" fill="#fff" />
          <path d="M3 3.500h10M3 6h10M3 8.500h6" stroke="#1e1e1e" />
          <circle cx="12" cy="12" r="3.500" fill="#fff" stroke="#1e1e1e" />
          <path d="m9.500 14 5-4.500" stroke="#1e1e1e" />
        </svg>
        <div className="ml-[20px] mr-[4px] h-[40px] w-px bg-[#7a7a7a]" />
      </div>
    </div>
  )
}

export default function App() {
  return (
    <div className="flex h-[1080px] w-[1920px] flex-col overflow-hidden bg-[#e6e6e6] font-['Open_Sans','Noto_Sans',sans-serif]">
      <TitleBar />
      <TabBar />
      <Ribbon />
      <div className="flex h-[858px] shrink-0 overflow-hidden">
        <NavigationPane />
        <DocumentView />
      </div>
      <StatusBar />
      <Taskbar />
    </div>
  )
}
